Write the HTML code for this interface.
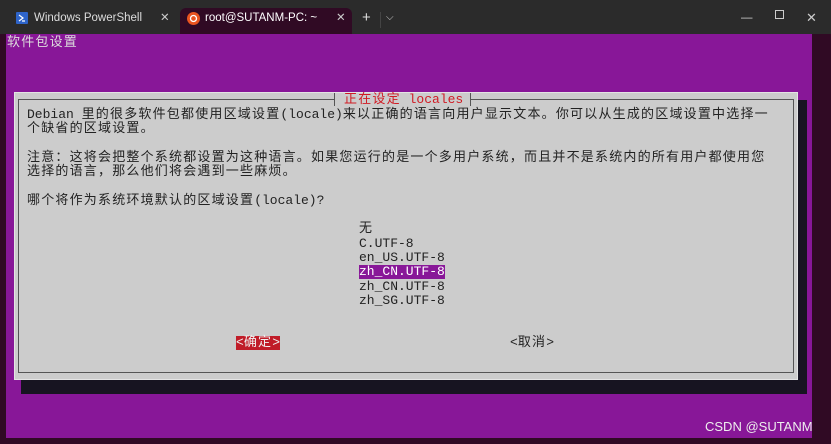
<!DOCTYPE html>
<html><head><meta charset="utf-8"><style>
*{margin:0;padding:0;box-sizing:border-box}
body{width:831px;height:444px;overflow:hidden;background:#2b2b2b;position:relative;font-family:"Liberation Mono","Noto Sans CJK SC",monospace}
.abs{position:absolute}
.tab{position:absolute;top:8px;height:26px;font-family:"Liberation Sans",sans-serif;font-size:11.5px;color:#fff;line-height:20px}
.term{position:absolute;left:0;top:34px;width:831px;height:410px;background:#300a24}
.purple{position:absolute;left:6px;top:34px;width:806px;height:404px;background:#881798}
.t{position:absolute;font-size:13px;line-height:14.4px;white-space:pre;color:#222}
i{font-style:normal;letter-spacing:1.2px}
</style></head><body>
<div class="tab" style="left:8px;width:164px;">
 <svg class="abs" style="left:8px;top:4px" width="12" height="12"><rect width="12" height="12" rx="1" fill="#2e64c9"/><path d="M3 3l4 3-4 3M6 9h3" stroke="#fff" stroke-width="1.2" fill="none"/></svg>
 <span class="abs" style="left:26px;top:0;color:#ddd">Windows PowerShell</span>
 <span class="abs" style="left:152px;top:0;color:#ccc">✕</span>
</div>
<div class="tab" style="left:180px;width:172px;background:#300a24;border-radius:6px 6px 0 0;height:26px;">
 <svg class="abs" style="left:7px;top:4px" width="13" height="13"><circle cx="6.5" cy="6.5" r="6.5" fill="#e95420"/><circle cx="6.5" cy="6.5" r="3" stroke="#fff" stroke-width="1.3" fill="none"/></svg>
 <span class="abs" style="left:25px;top:0">root@SUTANM-PC: ~</span>
 <span class="abs" style="left:156px;top:0;color:#ccc">✕</span>
</div>
<div class="tab" style="left:362px;color:#ddd;font-size:15px">+</div>
<div class="abs" style="left:380px;top:12px;width:1px;height:16px;background:#444"></div>
<div class="tab" style="left:386px;color:#ccc;font-size:10px">⌵</div>
<div class="tab" style="left:741px;color:#ccc">—</div>
<div class="abs" style="left:775px;top:10px;width:9px;height:9px;border:1px solid #ccc"></div>
<div class="tab" style="left:806px;color:#ccc;font-size:13px">✕</div>

<div class="term"></div>
<div class="purple"></div>
<div class="t" style="left:7px;top:36px;color:#ddd"><i>软件包设置</i></div>

<div class="abs" style="left:21px;top:380px;width:786px;height:14px;background:#171421"></div>
<div class="abs" style="left:798px;top:100px;width:9px;height:294px;background:#171421"></div>
<div class="abs" style="left:14px;top:92px;width:784px;height:288px;background:#cccccc;border:1px solid #e4e4e4"></div>
<div class="abs" style="left:18px;top:99px;width:776px;height:274px;border:1px solid #555"></div>
<div class="abs" style="left:334px;top:93px;width:137px;height:13px;background:#ccc;border-left:1px solid #555;border-right:1px solid #555"></div>
<div class="t" style="left:344px;top:93px;color:#d01b24"><i>正在设定</i> locales</div>

<div class="t" style="left:27px;top:108px">Debian <i>里的很多软件包都使用区域设置</i>(locale)<i>来以正确的语言向用户显示文本。你可以从生成的区域设置中选择一</i></div>
<div class="t" style="left:27px;top:122px"><i>个缺省的区域设置。</i></div>
<div class="t" style="left:27px;top:151px"><i>注意：这将会把整个系统都设置为这种语言。如果您运行的是一个多用户系统，而且并不是系统内的所有用户都使用您</i></div>
<div class="t" style="left:27px;top:165px"><i>选择的语言，那么他们将会遇到一些麻烦。</i></div>
<div class="t" style="left:27px;top:194px"><i>哪个将作为系统环境默认的区域设置</i>(locale)?</div>

<div class="t" style="left:359px;top:222px"><i>无</i></div>
<div class="t" style="left:359px;top:237px">C.UTF-8</div>
<div class="t" style="left:359px;top:251px">en_US.UTF-8</div>
<div class="t" style="left:359px;top:265px;background:#881798;color:#fff;width:86px">zh_CN.UTF-8</div>
<div class="t" style="left:359px;top:280px">zh_CN.UTF-8</div>
<div class="t" style="left:359px;top:294px">zh_SG.UTF-8</div>

<div class="t" style="left:236px;top:336px;background:#c01c28;color:#f0f0f0;width:44px">&lt;<i>确定</i>&gt;</div>
<div class="t" style="left:510px;top:336px">&lt;<i>取消</i>&gt;</div>

<div class="abs" style="left:705px;top:419px;font-family:'Liberation Sans',sans-serif;font-size:13px;color:#eee">CSDN @SUTANM</div>
</body></html>
